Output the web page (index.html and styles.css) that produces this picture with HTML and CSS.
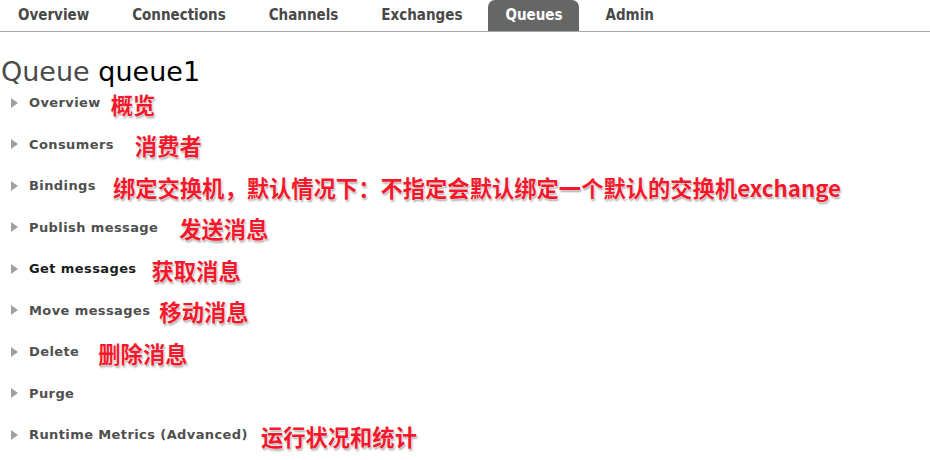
FILE: index.html
```html
<!DOCTYPE html>
<html lang="zh">
<head>
<meta charset="utf-8">
<title>Queue queue1</title>
<link rel="stylesheet" href="styles.css">
</head>
<body>
<nav class="tabs">
  <a class="tab">Overview</a>
  <a class="tab">Connections</a>
  <a class="tab">Channels</a>
  <a class="tab">Exchanges</a>
  <a class="tab active">Queues</a>
  <a class="tab">Admin</a>
</nav>
<h1 class="title"><span class="kind">Queue</span> <span class="name">queue1</span></h1>
<ul class="sections">
  <li class="row"><span class="arrow"></span><span class="head">Overview</span><span class="note g10">概览</span></li>
  <li class="row"><span class="arrow"></span><span class="head">Consumers</span><span class="note g21">消费者</span></li>
  <li class="row"><span class="arrow"></span><span class="head">Bindings</span><span class="note g17">绑定交换机，默认情况下：不指定会默认绑定一个默认的交换机exchange</span></li>
  <li class="row"><span class="arrow"></span><span class="head">Publish message</span><span class="note g21">发送消息</span></li>
  <li class="row"><span class="arrow"></span><span class="head dark">Get messages</span><span class="note g15">获取消息</span></li>
  <li class="row"><span class="arrow"></span><span class="head">Move messages</span><span class="note g9">移动消息</span></li>
  <li class="row"><span class="arrow"></span><span class="head">Delete</span><span class="note g19">删除消息</span></li>
  <li class="row"><span class="arrow"></span><span class="head">Purge</span></li>
  <li class="row"><span class="arrow"></span><span class="head">Runtime Metrics (Advanced)</span><span class="note g13">运行状况和统计</span></li>
</ul>
</body>
</html>
```

FILE: styles.css
```css
html, body {
  margin: 0;
  padding: 0;
  background: #fff;
}
body {
  font-family: "DejaVu Sans", Verdana, sans-serif;
  color: #484848;
  width: 930px;
  height: 460px;
  overflow: hidden;
}
.tabs {
  display: flex;
  height: 31px;
  border-bottom: 1px solid #a8a8a8;
  padding-left: 1px;
}
.tab {
  display: flex;
  align-items: center;
  padding: 0 17px 2px;
  margin-right: 9px;
  font-family: "DejaVu Sans Condensed", "DejaVu Sans", sans-serif;
  font-stretch: condensed;
  font-weight: bold;
  font-size: 15px;
  color: #484848;
  border-radius: 7px 7px 0 0;
}
.tab.active {
  background: #666;
  color: #fff;
}
.title {
  margin: 0;
  padding: 29px 0 0 1px;
  height: 21px;
  font-weight: normal;
  font-size: 27px;
  line-height: 22px;
}
.kind { color: #4a4a4a; }
.name { color: #000; }
.sections {
  list-style: none;
  margin: 0;
  padding: 0;
}
.row {
  display: flex;
  align-items: center;
  height: 41.5px;
  padding-left: 11px;
}
.arrow {
  width: 0;
  height: 0;
  border-left: 7px solid #a0a0a0;
  border-top: 5px solid transparent;
  border-bottom: 5px solid transparent;
  margin-right: 11px;
}
.head {
  font-weight: bold;
  font-size: 13px;
  letter-spacing: 0.4px;
  color: #4f4f4f;
}
.head.dark { color: #1c1c1c; }
.note {
  font-family: "Noto Sans CJK SC", sans-serif;
  font-weight: bold;
  font-size: 22.3px;
  line-height: 26px;
  color: #f3182b;
  position: relative;
  top: 1px;
  text-shadow: 0 0 1px #fff, 0 0 2px #fff, 1px 2px 2px rgba(0,0,0,0.35);
}
.g9 { margin-left: 9px; }
.g10 { margin-left: 10px; }
.g13 { margin-left: 13px; }
.g15 { margin-left: 15px; }
.g17 { margin-left: 17px; }
.g19 { margin-left: 19px; }
.g21 { margin-left: 21px; }
```
